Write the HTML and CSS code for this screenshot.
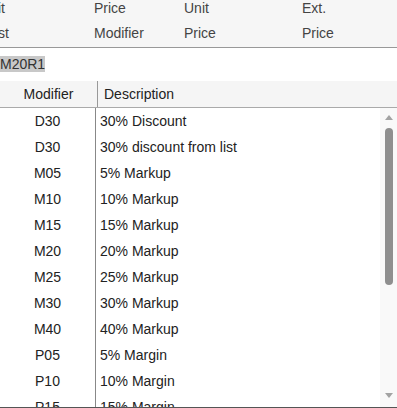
FILE: index.html
```html
<!DOCTYPE html>
<html lang="en">
<head>
    <meta charset="UTF-8">
    <title>Price Modifiers</title>
    <link rel="stylesheet" href="styles.css">
</head>
<body>

    <div class="summary">
        <div class="summary-row">
            <span class="first">Unit</span>
            <span>Price</span>
            <span>Unit</span>
            <span>Ext.</span>
        </div>
        <div class="summary-row">
            <span class="first">Cost</span>
            <span>Modifier</span>
            <span>Price</span>
            <span>Price</span>
        </div>
    </div>

    <div class="filter">
        <span class="selected">M20R1</span>
    </div>

    <div class="list-head">
        <div class="head-code">Modifier</div>
        <div class="head-desc">Description</div>
    </div>

    <div class="list-body">
        <div class="rows">
            <div class="row"><div class="code">D30</div><div class="desc">30% Discount</div></div>
            <div class="row"><div class="code">D30</div><div class="desc">30% discount from list</div></div>
            <div class="row"><div class="code">M05</div><div class="desc">5% Markup</div></div>
            <div class="row"><div class="code">M10</div><div class="desc">10% Markup</div></div>
            <div class="row"><div class="code">M15</div><div class="desc">15% Markup</div></div>
            <div class="row"><div class="code">M20</div><div class="desc">20% Markup</div></div>
            <div class="row"><div class="code">M25</div><div class="desc">25% Markup</div></div>
            <div class="row"><div class="code">M30</div><div class="desc">30% Markup</div></div>
            <div class="row"><div class="code">M40</div><div class="desc">40% Markup</div></div>
            <div class="row"><div class="code">P05</div><div class="desc">5% Margin</div></div>
            <div class="row"><div class="code">P10</div><div class="desc">10% Margin</div></div>
            <div class="row"><div class="code">P15</div><div class="desc">15% Margin</div></div>
        </div>
        <div class="scrollbar">
            <div class="arrow-up"></div>
            <div class="thumb"></div>
            <div class="track-rest"></div>
            <div class="arrow-down"></div>
        </div>
    </div>

</body>
</html>
```

FILE: styles.css
```css
html, body {
    margin: 0;
    height: 408px;
    overflow: hidden;
}

body {
    font-family: "Liberation Sans", Arial, sans-serif;
    font-size: 14px;
    color: #222;
    background-color: #fff;
}

.summary {
    height: 47px;
    background-color: #f6f6f6;
    border-bottom: 1px solid #999;
    color: #444;
}

.summary-row {
    display: grid;
    grid-template-columns: 94px 90px 118px 1fr;
    height: 25px;
    line-height: 16px;
}

.summary-row .first {
    margin-left: -20px;
}

.filter {
    height: 33px;
    padding-top: 8px;
    box-sizing: border-box;
}

.selected {
    display: inline-block;
    background-color: #c8c8c8;
    color: #333;
    line-height: 16px;
}

.list-head {
    display: flex;
    height: 26px;
    line-height: 26px;
    background-color: #f5f5f5;
    border-bottom: 1px solid #aaa;
}

.head-code {
    width: 97px;
    text-align: center;
    border-right: 1px solid #999;
}

.head-desc {
    padding-left: 6px;
}

.list-body {
    display: flex;
    height: 299px;
    border-bottom: 1px solid #555;
    overflow: hidden;
}

.rows {
    flex: 1;
}

.row {
    display: flex;
    height: 26px;
    line-height: 26px;
}

.code {
    width: 95px;
    text-align: center;
    border-right: 1px solid #888;
}

.desc {
    padding-left: 4px;
}

.scrollbar {
    width: 17px;
    background-color: #f9f9f9;
    display: flex;
    flex-direction: column;
    align-items: center;
}

.arrow-up {
    margin-top: 7px;
    border-left: 4px solid transparent;
    border-right: 4px solid transparent;
    border-bottom: 5px solid #a3a3a3;
}

.thumb {
    margin-top: 8px;
    width: 8px;
    height: 157px;
    border-radius: 4px;
    background-color: #8f8f8f;
}

.track-rest {
    flex: 1;
}

.arrow-down {
    margin-bottom: 9px;
    border-left: 4px solid transparent;
    border-right: 4px solid transparent;
    border-top: 5px solid #a3a3a3;
}
```
